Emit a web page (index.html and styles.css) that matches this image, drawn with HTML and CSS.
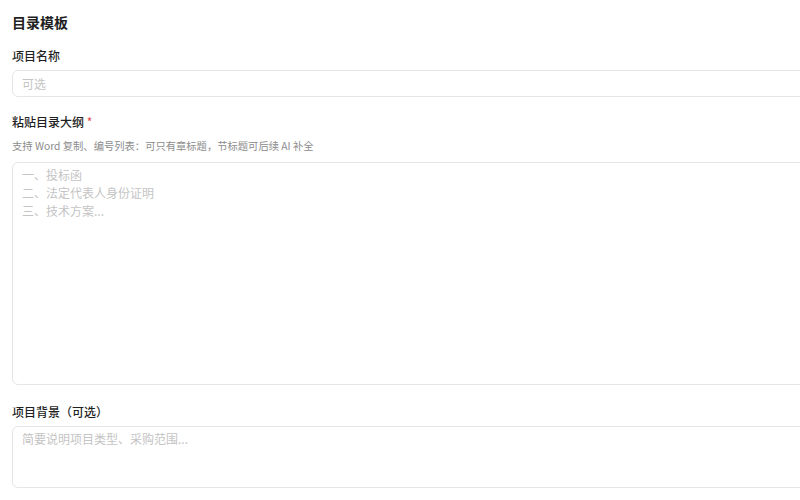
FILE: index.html
```html
<!DOCTYPE html>
<html lang="zh-CN">
<head>
    <meta charset="UTF-8">
    <meta name="viewport" content="width=device-width, initial-scale=1.0">
    <title>目录模板</title>
    <link rel="stylesheet" href="styles.css">
</head>
<body>
    <div class="panel">
        <h2 class="panel-title">目录模板</h2>

        <div class="field">
            <label class="field-label" for="projectName">项目名称</label>
            <input class="field-input" id="projectName" type="text" placeholder="可选">
        </div>

        <div class="field">
            <label class="field-label" for="outline">粘贴目录大纲 <span class="required">*</span></label>
            <p class="field-hint">支持 Word 复制、编号列表：可只有章标题，节标题可后续 AI 补全</p>
            <textarea class="field-input outline" id="outline" placeholder="一、投标函&#10;二、法定代表人身份证明&#10;三、技术方案..."></textarea>
        </div>

        <div class="field">
            <label class="field-label" for="background">项目背景（可选）</label>
            <textarea class="field-input background" id="background" placeholder="简要说明项目类型、采购范围..."></textarea>
        </div>
    </div>
</body>
</html>
```

FILE: styles.css
```css
html, body {
    overflow: hidden;
}
body {
    margin: 0;
    background-color: #fff;
    font-family: "Noto Sans CJK SC", "Noto Sans", sans-serif;
    color: #1f1f1f;
}
.panel {
    width: 1000px;
    padding: 12px 12px 0 12px;
}
.panel-title {
    margin: 0 0 15px 0;
    font-size: 14px;
    line-height: 20px;
    font-weight: 600;
}
.field {
    margin-bottom: 16px;
}
.field-label {
    display: block;
    margin-bottom: 5px;
    font-size: 12px;
    line-height: 18px;
    font-weight: 500;
}
.required {
    color: #e5484d;
    font-weight: 400;
}
.field-hint {
    margin: 7px 0 8px 0;
    font-size: 10.3px;
    line-height: 16px;
    color: #8c8c8c;
}
.field-input {
    display: block;
    box-sizing: border-box;
    width: 100%;
    margin: 0;
    border: 1px solid #e6e6e6;
    border-radius: 6px;
    background-color: #fff;
    font-family: inherit;
    font-size: 12px;
    color: #1f1f1f;
    outline: none;
}
.field-input::placeholder {
    color: #c4c4c4;
}
input.field-input {
    height: 27px;
    padding: 0 9px;
}
textarea.field-input {
    padding: 3px 9px;
    line-height: 18px;
    resize: vertical;
}
.outline {
    height: 223px;
}
.background {
    height: 62px;
}
.field:has(.outline) {
    margin-bottom: 18px;
}
```
